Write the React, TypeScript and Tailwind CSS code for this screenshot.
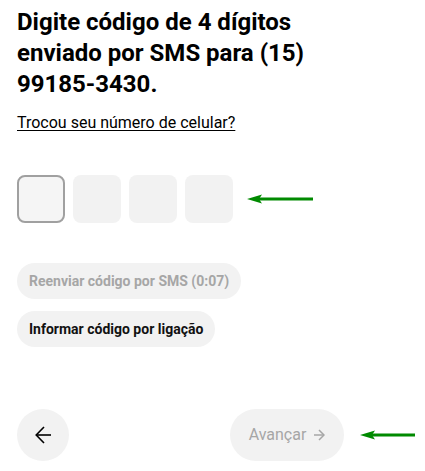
import { useState } from "react";

const GreenArrow = ({ width }: { width: number }) => (
  <svg width={width} height="10" viewBox={`0 0 ${width} 10`} fill="none" className="shrink-0">
    <path d={`M${width} 5H10`} stroke="#008a00" strokeWidth="3" />
    <path d="M0 5L15 0.5L12 5L15 9.5Z" fill="#008a00" />
  </svg>
);

const App = () => {
  const [digits] = useState(["", "", "", ""]);

  return (
    <div
      className="w-[425px] h-[471px] bg-white px-[17px] pt-[7px] text-black overflow-hidden"
      style={{ fontFamily: "Roboto, 'Liberation Sans', sans-serif" }}
    >
      <h1 className="text-[24px] leading-[31px] font-bold w-[300px]">
        Digite código de 4 dígitos enviado por SMS para (15) 99185-3430.
      </h1>

      <a href="#" className="block mt-[13px] text-base leading-5 underline underline-offset-2 w-fit">
        Trocou seu número de celular?
      </a>

      <div className="flex items-center mt-[42px]">
        <div className="flex gap-2 shrink-0">
          {digits.map((d, i) => (
            <input
              key={i}
              value={d}
              readOnly
              maxLength={1}
              className={
                i === 0
                  ? "w-12 h-12 rounded-lg bg-[#f5f5f5] border-2 border-[#a0a0a0] outline-none text-center"
                  : "w-12 h-12 rounded-lg bg-[#f2f2f2] outline-none text-center"
              }
            />
          ))}
        </div>
        <div className="ml-[14px] shrink-0">
          <GreenArrow width={66} />
        </div>
      </div>

      <div className="flex flex-col items-start gap-3 mt-10">
        <button className="h-9 px-3 rounded-full bg-[#f2f2f2] text-sm font-bold text-[#a6a6a6]">
          Reenviar código por SMS (0:07)
        </button>
        <button className="h-9 px-3 rounded-full bg-[#f2f2f2] text-sm font-bold text-[#111]">
          Informar código por ligação
        </button>
      </div>

      <div className="flex items-center mt-[62px]">
        <div className="flex items-center justify-between w-[327px] shrink-0">
          <button className="w-[52px] h-[52px] rounded-full bg-[#f2f2f2] flex items-center justify-center">
            <svg width="16" height="18" viewBox="0 0 16 18" fill="none" stroke="#000" strokeWidth="1.6">
              <path d="M16 9H1.2" />
              <path d="M9 1L1.2 9L9 17" />
            </svg>
          </button>
          <button className="h-[52px] w-[114px] rounded-full bg-[#f2f2f2] flex items-center justify-center gap-2 text-base text-[#a6a6a6]">
            Avançar
            <svg width="11" height="12" viewBox="0 0 11 12" fill="none" stroke="#a6a6a6" strokeWidth="1.5">
              <path d="M0 6H10" />
              <path d="M5 1L10 6L5 11" />
            </svg>
          </button>
        </div>
        <div className="ml-[16px] shrink-0">
          <GreenArrow width={55} />
        </div>
      </div>
    </div>
  );
};

export default App;
